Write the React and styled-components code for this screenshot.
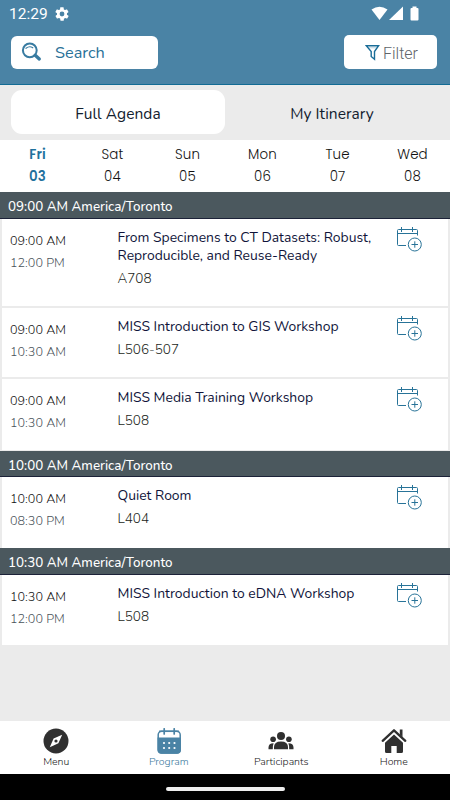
import styled, { createGlobalStyle } from 'styled-components';

const GlobalStyle = createGlobalStyle`
    * {
        box-sizing: border-box;
    }
    body {
        margin: 0;
        background: #ebebeb;
        font-family: Nunito, Lato, "Noto Sans", sans-serif;
    }
    svg {
        display: block;
        flex: none;
    }
`;

const Screen = styled.div`
    width: 450px;
    height: 800px;
    display: flex;
    flex-direction: column;
    background: #ebebeb;
    overflow: hidden;
    white-space: nowrap;
`;

const Header = styled.header`
    height: 85px;
    flex: none;
    background: #4a83a5;
    border-bottom: 1px solid #126b94;
`;

const StatusBar = styled.div`
    height: 27px;
    padding: 0 30px 0 9px;
    display: flex;
    align-items: center;
    color: #fff;
    .clock {
        font: 400 15.5px/28px Roboto, sans-serif;
        width: 45px;
    }
    .signals {
        margin-left: auto;
    }
`;

const Toolbar = styled.div`
    display: flex;
    justify-content: space-between;
    align-items: center;
    padding: 8px 13px 0 11px;
`;

const SearchBox = styled.div`
    width: 147px;
    height: 33px;
    padding-left: 10px;
    display: flex;
    align-items: center;
    border-radius: 6px;
    background: #fff;
    color: #2a7198;
    font-size: 16.3px;
    span {
        margin: 1px 0 0 12px;
    }
`;

const FilterButton = styled.div`
    width: 93px;
    height: 34px;
    padding-left: 21px;
    display: flex;
    align-items: center;
    border-radius: 5px;
    background: #fff;
    color: #606468;
    font: 350 16px Roboto, sans-serif;
    span {
        margin: 2px 0 0 3px;
    }
`;

const Tabs = styled.div`
    height: 55px;
    flex: none;
    display: flex;
    padding: 5px 11px 6px;
`;

const Tab = styled.div`
    flex: 1;
    border-radius: 11px;
    background: ${(p) => (p.$active ? '#fff' : 'transparent')};
    color: #12202e;
    font-size: 15.5px;
    line-height: 47px;
    letter-spacing: 0.05px;
    text-align: center;
`;

const Days = styled.div`
    height: 52px;
    flex: none;
    display: grid;
    grid-template-columns: repeat(6, 1fr);
    background: #fff;
    padding-top: 3.6px;
`;

const Day = styled.div`
    text-align: center;
    font-family: Poppins, Inter, sans-serif;
    font-size: 13.4px;
    letter-spacing: 0.15px;
    line-height: 22.4px;
    font-weight: ${(p) => (p.$active ? 600 : 300)};
    color: ${(p) => (p.$active ? '#1f719d' : '#111')};
`;

const SlotHeader = styled.div`
    height: ${(p) => p.$height}px;
    flex: none;
    padding-left: 8px;
    background: #4b585e;
    border-bottom: 1px solid #1c2238;
    color: #fff;
    font-size: 13.4px;
    font-weight: 500;
    line-height: 29px;
`;

const Session = styled.div`
    height: ${(p) => p.$height}px;
    flex: none;
    margin: 0 2px;
    padding: 9.5px 24px 0 8px;
    display: flex;
    background: #fff;
    border-bottom: ${(p) => p.$divider}px solid #ebebeb;
    svg {
        margin-top: -2.5px;
    }
`;

const Times = styled.div`
    width: 107.5px;
    padding-top: 1px;
    font-size: 12.6px;
    font-weight: 340;
    line-height: 22.7px;
    color: #111;
    .end {
        color: #4a535a;
    }
`;

const Details = styled.div`
    flex: 1;
    color: #10143a;
    font-size: 13.9px;
    font-weight: 370;
    line-height: 18px;
    .room {
        margin-top: 5px;
        font-size: 13.5px;
        font-weight: 320;
        color: #1c1f22;
    }
`;

const BottomNav = styled.nav`
    height: 53px;
    flex: none;
    margin-top: auto;
    display: grid;
    grid-template-columns: repeat(4, 1fr);
    background: #fff;
`;

const NavItem = styled.div`
    padding-top: 7px;
    display: flex;
    flex-direction: column;
    align-items: center;
    color: ${(p) => (p.$active ? '#3a789d' : '#222')};
    font-size: 10.5px;
    font-weight: 300;
    line-height: 15px;
`;

const SystemBar = styled.div`
    height: 26px;
    flex: none;
    background: #000;
    padding-top: 13px;
    &::after {
        content: '';
        display: block;
        width: 119px;
        height: 4px;
        margin: 0 auto;
        border-radius: 2px;
        background: #eee;
    }
`;

const GearIcon = () => (
    <svg width="16" height="16" viewBox="0 0 24 24" fill="#fff">
        <path d="M19.4 13c0-.3.1-.6.1-1s0-.7-.1-1l2.1-1.6c.2-.2.2-.4.1-.6l-2-3.500c-.1-.2-.4-.3-.6-.2l-2.500 1c-.5-.4-1.100-.7-1.700-1l-.4-2.600c0-.3-.2-.5-.5-.5h-4c-.3 0-.5.2-.5.4l-.4 2.700c-.6.2-1.100.6-1.700 1l-2.500-1c-.2-.1-.5 0-.6.2l-2 3.500c-.1.2-.1.4.1.6L4.600 11c-.1.300-.1.600-.1 1s0 .7.1 1l-2.100 1.600c-.2.2-.2.4-.1.6l2 3.500c.1.2.4.3.6.2l2.500-1c.5.4 1.100.7 1.700 1l.4 2.600c0 .3.2.5.5.5h4c.3 0 .5-.2.5-.4l.4-2.700c.6-.2 1.100-.6 1.700-1l2.500 1c.2.100.5 0 .6-.2l2-3.500c.1-.2.1-.4-.1-.6zM12 15.600a3.600 3.600 0 1 1 0-7.200 3.600 3.600 0 0 1 0 7.200z" />
    </svg>
);

const SignalIcons = () => (
    <svg className="signals" width="49" height="16" viewBox="0 0 49 16" fill="#fff">
        <path d="M0.500 3.500Q8.500-2 16.500 3.500L8.500 14z" />
        <path d="M32 0.500V14H18z" />
        <path d="M41.500 .5h4v1.500h1q1 0 1 1V13.500q0 1-1 1h-6q-1 0-1-1V3q0-1 1-1h1z" />
    </svg>
);

const SearchIcon = () => (
    <svg width="22" height="20" viewBox="0 0 22 20" fill="none" stroke="#387ba1" strokeLinecap="round">
        <circle cx="8.800" cy="8.300" r="6.900" strokeWidth="2" />
        <path d="M5 6.300Q8.500 3.600 11.800 5.800" strokeWidth="1.100" />
        <path d="M14.200 13.200L18.300 17" strokeWidth="3.300" />
    </svg>
);

const FilterIcon = () => (
    <svg width="15" height="17" viewBox="0 0 15 17" fill="none" stroke="#1a6d98" strokeWidth="1.400">
        <path d="M1.300 1.700H13.600L9.500 7.500V15.200L6.200 12.500V7.500z" />
        <path d="M3.500 3.800H11.500" strokeWidth=".5" opacity=".6" />
    </svg>
);

const AddToCalendar = () => (
    <svg width="28" height="28" viewBox="0 0 28 28" fill="none" stroke="#287398" strokeWidth="1">
        <path d="M21.500 9.500V4.500Q21.500 3.500 20.500 3.500H2.500Q1.500 3.500 1.500 4.500V18.500Q1.500 19.500 2.500 19.500H10" />
        <path d="M1.500 7.500H21.500" />
        <path d="M5.500 1V6M16.500 1V6" />
        <circle cx="18.800" cy="18.500" r="6.500" />
        <path d="M15.500 18.500H22M18.800 15.300V21.700" />
    </svg>
);

const CompassIcon = () => (
    <svg width="26" height="26" viewBox="0 0 26 26">
        <circle cx="13" cy="13" r="12.500" fill="#303030" />
        <path d="M19.200 6.800L15.400 15.300L6.800 19.300L10.600 10.600z" fill="#fff" />
        <circle cx="13" cy="13" r="1.600" fill="#303030" />
    </svg>
);

const ProgramIcon = () => (
    <svg width="26" height="26" viewBox="0 0 26 26">
        <rect x="2.200" y="3.200" width="22" height="21.800" rx="3.500" fill="#fff" stroke="#4a83a5" strokeWidth="1.500" />
        <path d="M1.500 9.500H25V22Q25 25.700 21.200 25.700H5.300Q1.500 25.700 1.500 22z" fill="#4a83a5" />
        <path d="M3 3.300H23" stroke="#4a83a5" strokeWidth="1.500" />
        <path d="M8.200 .8V6M18.200 .8V6" stroke="#4a83a5" strokeWidth="1.700" strokeLinecap="round" />
        <g fill="#fff">
            <circle cx="8" cy="15" r="1.100" />
            <circle cx="13.200" cy="15" r="1.100" />
            <circle cx="18.500" cy="15" r="1.100" />
            <circle cx="8" cy="20" r="1.100" />
            <circle cx="13.200" cy="20" r="1.100" />
            <circle cx="18.500" cy="20" r="1.100" />
        </g>
    </svg>
);

const PeopleIcon = () => (
    <svg width="26" height="26" viewBox="0 0 26 26" fill="#303030">
        <circle cx="13" cy="8" r="4" />
        <circle cx="5.100" cy="11.300" r="2.800" />
        <circle cx="20.900" cy="11.300" r="2.800" />
        <path d="M6 21.200V19Q6 13.400 13 13.400T20 19V21.200z" />
        <path d="M.5 21.200V19.500Q.5 15.200 5.600 15.200Q4.800 17 4.800 21.200z" />
        <path d="M25.500 21.200V19.500Q25.500 15.200 20.400 15.200Q21.200 17 21.200 21.200z" />
    </svg>
);

// roof line sits clear of the walls
const HomeIcon = () => (
    <svg width="26" height="26" viewBox="0 0 26 26">
        <path d="M1.700 12.800L13 2.300L24.300 12.800" fill="none" stroke="#303030" strokeWidth="2.300" strokeLinecap="round" strokeLinejoin="round" />
        <path d="M18.800 1.500H21.500V9L18.800 6.500z" fill="#303030" />
        <path d="M4 14.800L13 6.600L22 14.800V23.500Q22 25 20.500 25H15.700V18H10.300V25H5.500Q4 25 4 23.500z" fill="#303030" />
    </svg>
);

const days = [
    ['Fri', '03'],
    ['Sat', '04'],
    ['Sun', '05'],
    ['Mon', '06'],
    ['Tue', '07'],
    ['Wed', '08'],
];

const slots = [
    {
        label: '09:00 AM America/Toronto',
        height: 27,
        sessions: [
            { start: '09:00 AM', end: '12:00 PM', title: ['From Specimens to CT Datasets: Robust,', 'Reproducible, and Reuse-Ready'], room: 'A708', height: 89, divider: 2 },
            { start: '09:00 AM', end: '10:30 AM', title: ['MISS Introduction to GIS Workshop'], room: 'L506-507', height: 71, divider: 2 },
            { start: '09:00 AM', end: '10:30 AM', title: ['MISS Media Training Workshop'], room: 'L508', height: 72, divider: 1 },
        ],
    },
    {
        label: '10:00 AM America/Toronto',
        height: 26,
        sessions: [
            { start: '10:00 AM', end: '08:30 PM', title: ['Quiet Room'], room: 'L404', height: 71, divider: 0 },
        ],
    },
    {
        label: '10:30 AM America/Toronto',
        height: 27,
        sessions: [
            { start: '10:30 AM', end: '12:00 PM', title: ['MISS Introduction to eDNA Workshop'], room: 'L508', height: 70, divider: 0 },
        ],
    },
];

const navItems = [
    { label: 'Menu', icon: <CompassIcon /> },
    { label: 'Program', icon: <ProgramIcon />, active: true },
    { label: 'Participants', icon: <PeopleIcon /> },
    { label: 'Home', icon: <HomeIcon /> },
];

const SessionRow = ({ session }) => (
    <Session $height={session.height} $divider={session.divider}>
        <Times>
            <div>{session.start}</div>
            <div className="end">{session.end}</div>
        </Times>
        <Details>
            {session.title.map((line) => (
                <div key={line}>{line}</div>
            ))}
            <div className="room">{session.room}</div>
        </Details>
        <AddToCalendar />
    </Session>
);

const App = () => {
    return (
        <Screen>
            <GlobalStyle />
            <Header>
                <StatusBar>
                    <span className="clock">12:29</span>
                    <GearIcon />
                    <SignalIcons />
                </StatusBar>
                <Toolbar>
                    <SearchBox>
                        <SearchIcon />
                        <span>Search</span>
                    </SearchBox>
                    <FilterButton>
                        <FilterIcon />
                        <span>Filter</span>
                    </FilterButton>
                </Toolbar>
            </Header>
            <Tabs>
                <Tab $active>Full Agenda</Tab>
                <Tab>My Itinerary</Tab>
            </Tabs>
            <Days>
                {days.map(([name, date], i) => (
                    <Day key={name} $active={i === 0}>
                        <div>{name}</div>
                        <div>{date}</div>
                    </Day>
                ))}
            </Days>
            {slots.map((slot) => (
                <div key={slot.label}>
                    <SlotHeader $height={slot.height}>{slot.label}</SlotHeader>
                    {slot.sessions.map((session) => (
                        <SessionRow key={session.title[0]} session={session} />
                    ))}
                </div>
            ))}
            <BottomNav>
                {navItems.map((item) => (
                    <NavItem key={item.label} $active={item.active}>
                        {item.icon}
                        {item.label}
                    </NavItem>
                ))}
            </BottomNav>
            <SystemBar />
        </Screen>
    );
};

export default App;
